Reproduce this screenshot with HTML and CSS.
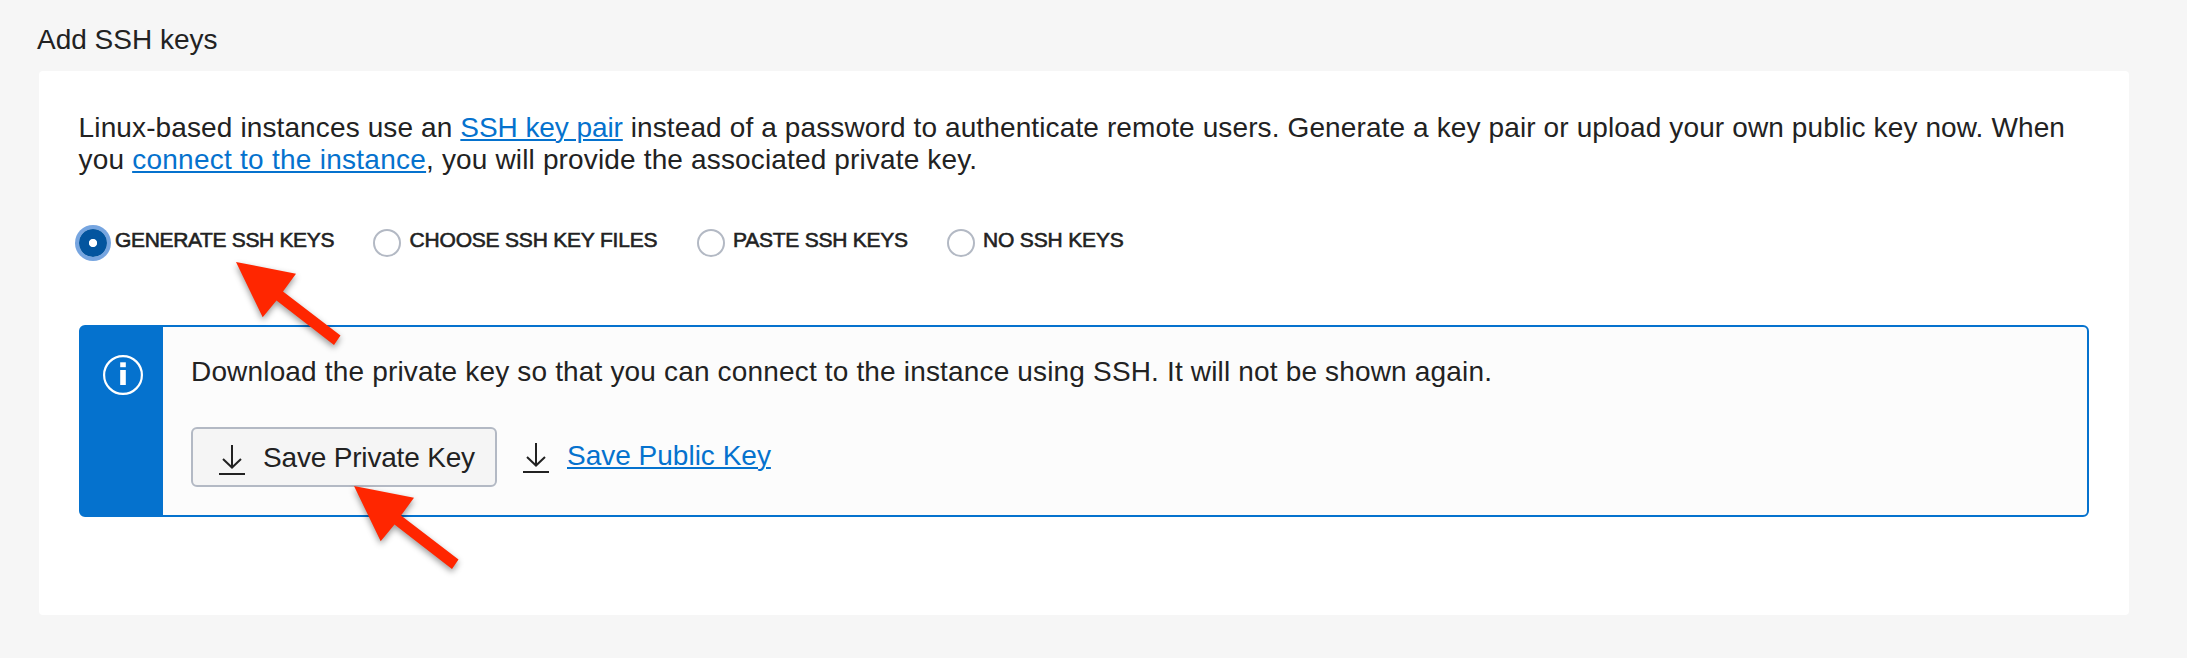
FILE: index.html
```
<!DOCTYPE html>
<html lang="en">
<head>
<meta charset="utf-8">
<title>Add SSH keys</title>
<link rel="stylesheet" href="styles.css">
</head>
<body>
<main class="page">
  <h1 class="section-title">Add SSH keys</h1>
  <section class="panel">
    <p class="intro">
      <span class="line">Linux-based instances use an <a class="link link-pair" href="#">SSH key pair</a> instead of a password to authenticate remote users. Generate a key pair or upload your own public key now. When</span>
      <span class="line line-second">you <a class="link link-connect" href="#">connect to the instance</a>, you will provide the associated private key.</span>
    </p>
    <div class="options" role="radiogroup">
      <label class="option option-generate"><span class="radio radio-on"></span><span>GENERATE SSH KEYS</span></label>
      <label class="option option-choose"><span class="radio"></span><span>CHOOSE SSH KEY FILES</span></label>
      <label class="option option-paste"><span class="radio"></span><span>PASTE SSH KEYS</span></label>
      <label class="option option-none"><span class="radio"></span><span>NO SSH KEYS</span></label>
    </div>
    <div class="notice">
      <div class="notice-side">
        <svg class="info-icon" width="40" height="40" viewBox="0 0 40 40">
          <circle cx="20" cy="20" r="18.9" fill="none" stroke="#fff" stroke-width="2.2"/>
          <rect x="17.2" y="7.3" width="5.6" height="4.9" fill="#fff"/>
          <rect x="17.2" y="15" width="5.6" height="15" fill="#fff"/>
        </svg>
      </div>
      <div class="notice-body">
        <p class="notice-text">Download the private key so that you can connect to the instance using SSH. It will not be shown again.</p>
        <div class="actions">
          <button class="save-button" type="button">
            <svg class="download-icon" width="26" height="32" viewBox="0 0 26 32">
              <path d="M13 1V24M4 15L13 23.5L22 15" fill="none" stroke="#222" stroke-width="2"/>
              <rect y="29" width="26" height="2" fill="#222"/>
            </svg>
            <span class="save-label">Save Private Key</span>
          </button>
          <div class="save-public">
            <svg class="download-icon" width="26" height="32" viewBox="0 0 26 32">
              <path d="M13 1V24M4 15L13 23.5L22 15" fill="none" stroke="#222" stroke-width="2"/>
              <rect y="29" width="26" height="2" fill="#222"/>
            </svg>
            <a class="link save-label" href="#">Save Public Key</a>
          </div>
        </div>
      </div>
    </div>
  </section>
  <svg class="pointer pointer-generate" width="106" height="84" viewBox="0 0 106 84">
    <path d="M0 0L60 11.7L47 29.5L104.5 73.5L98 83L40.5 38.5L26.7 55.3Z" fill="#ff2600"/>
  </svg>
  <svg class="pointer pointer-save" width="106" height="84" viewBox="0 0 106 84">
    <path d="M0 0L60 11.7L47 29.5L104.5 73.5L98 83L40.5 38.5L26.7 55.3Z" fill="#ff2600"/>
  </svg>
</main>
</body>
</html>
```
FILE: styles.css
```
* { box-sizing: border-box; }

body {
  margin: 0;
  background: #f6f6f6;
  color: #222;
  font: 28px/32px "Liberation Sans", Arial, sans-serif;
}

.page {
  position: relative;
  height: 658px;
  padding: 24px 58px 0 39px;
  overflow: hidden;
}

.section-title {
  margin: 0 0 15px -2px;
  font-size: 28px;
  font-weight: 400;
}

.panel {
  height: 544px;
  padding: 41px 40px 0;
  border-radius: 4px;
  background: #fff;
}

.intro {
  margin: 0 0 0 -0.4px;
  letter-spacing: 0.12px;
}

.line {
  display: block;
  white-space: nowrap;
}

.line-second { letter-spacing: 0.15px; }

.link {
  color: #0572ce;
  text-decoration: underline;
  text-decoration-thickness: 2px;
  text-underline-offset: 2px;
}

.link-pair { letter-spacing: -0.08px; }
.link-connect { letter-spacing: 0.26px; }

.options {
  display: flex;
  margin-top: 53px;
}

.option {
  display: flex;
  gap: 8px;
  height: 28px;
  font-size: 21px;
  line-height: 22px;
  white-space: nowrap;
  -webkit-text-stroke: 0.6px #222;
}

.option-generate { width: 294px; letter-spacing: -0.34px; }
.option-choose { width: 324px; gap: 8.6px; letter-spacing: -0.2px; }
.option-paste { width: 250px; letter-spacing: -0.25px; }
.option-none { letter-spacing: -0.16px; }

.radio {
  flex: none;
  width: 28px;
  height: 28px;
  border: 2px solid #b3b9c4;
  border-radius: 50%;
}

.radio-on {
  border: 0;
  background: radial-gradient(circle, #fff 3.7px, #03559f 4.5px);
  box-shadow: 0 0 0 4px #76a5e0;
}

.notice {
  display: flex;
  height: 192px;
  margin-top: 68px;
  border: 2px solid #0572ce;
  border-radius: 6px;
  background: #fcfcfc;
}

.notice-side {
  flex: none;
  width: 82px;
  padding: 28px 0 0 22px;
  background: #0572ce;
}

.info-icon,
.download-icon {
  display: block;
  flex: none;
}

.notice-body { padding: 29px 0 0 28px; }

.notice-text {
  margin: 0;
  letter-spacing: 0.165px;
  white-space: nowrap;
}

.actions {
  display: flex;
  gap: 26px;
  margin-top: 39px;
}

.save-button {
  display: flex;
  width: 306px;
  height: 60px;
  padding: 14px 0 0 26px;
  gap: 18px;
  align-items: flex-start;
  border: 2px solid #b3b9c4;
  border-radius: 6px;
  background: #f5f5f5;
  color: #222;
  font: inherit;
  letter-spacing: -0.18px;
  white-space: nowrap;
}

.save-public {
  display: flex;
  gap: 18px;
  padding-top: 15px;
}

.save-button .download-icon { margin-top: 1px; }
.save-label { margin-top: -1px; }
.save-public .save-label { margin-top: -2px; }

.pointer {
  position: absolute;
  overflow: visible;
  filter: drop-shadow(0 3px 3px rgba(0, 0, 0, 0.4));
}

.pointer-generate { left: 236px; top: 262px; }
.pointer-save { left: 354px; top: 486px; }
```
